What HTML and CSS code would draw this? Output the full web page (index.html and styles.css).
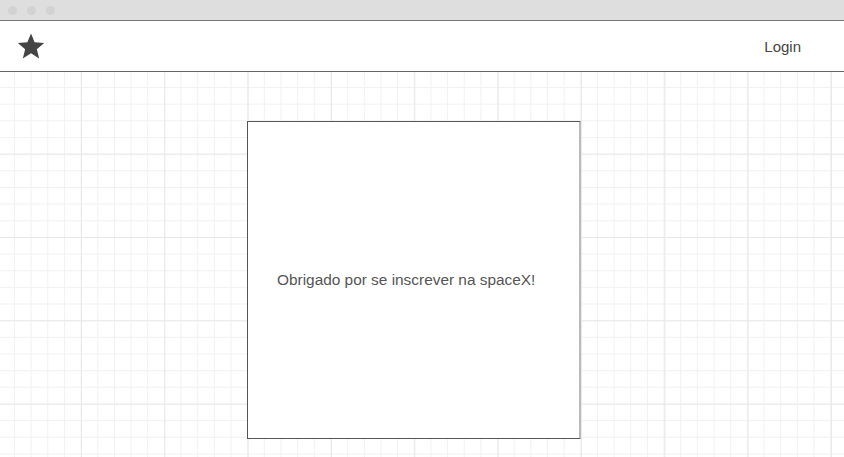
FILE: index.html
```html
<!DOCTYPE html>
<html lang="pt">
<head>
<meta charset="utf-8">
<title>spaceX</title>
<link rel="stylesheet" href="styles.css">
</head>
<body>
<div class="chrome">
  <span class="dot"></span><span class="dot"></span><span class="dot"></span>
</div>
<header class="nav">
  <svg class="logo" width="28" height="28" viewBox="0 0 24 24" aria-hidden="true">
    <path d="M12 1.2l3.1 7.6 8.2.6-6.3 5.3 2 8L12 18.3l-7 4.4 2-8L.7 9.4l8.2-.6z" fill="#444"/>
  </svg>
  <a class="login" href="#">Login</a>
</header>
<main class="canvas">
  <section class="card">
    <p class="msg">Obrigado por se inscrever na spaceX!</p>
  </section>
</main>
</body>
</html>
```
FILE: styles.css
```css
html, body {
  margin: 0;
  padding: 0;
  height: 100%;
}
body {
  font-family: "Liberation Sans", Arial, sans-serif;
  background: #fff;
  overflow: hidden;
}
.chrome {
  height: 20px;
  background: #dedede;
  border-bottom: 1px solid #777;
  display: flex;
  align-items: center;
  gap: 10px;
  padding-left: 8px;
}
.dot {
  width: 9px;
  height: 9px;
  border-radius: 50%;
  background: #d2d2d2;
}
.nav {
  height: 50px;
  border-bottom: 1px solid #666;
  display: flex;
  align-items: center;
  justify-content: space-between;
  padding: 0 43px 0 17px;
  background: #fff;
}
.logo {
  display: block;
}
.login {
  color: #444;
  font-size: 15px;
  text-decoration: none;
}
.canvas {
  height: 385px;
  padding: 49px 0 0 247px;
  box-sizing: border-box;
  background-color: #fff;
  background-image:
    linear-gradient(to right, #e8e8e8 1px, transparent 1px),
    linear-gradient(to bottom, #e8e8e8 1px, transparent 1px),
    linear-gradient(to right, #f1f1f1 1px, transparent 1px),
    linear-gradient(to bottom, #f1f1f1 1px, transparent 1px);
  background-size: 83.333px 83.333px, 83.333px 83.333px, 16.667px 16.667px, 16.667px 16.667px;
  background-position: -2.333px 15px, 14px -1.667px, 14px 15px, 14px 15px;
}
.card {
  width: 302px;
  height: 316px;
  background: #fff;
  border: 1px solid #555;
  border-right: 2px solid #bbb;
  display: flex;
  align-items: center;
  padding-left: 29px;
  box-sizing: content-box;
}
.msg {
  margin: 0;
  color: #555;
  font-size: 15.4px;
}
```
